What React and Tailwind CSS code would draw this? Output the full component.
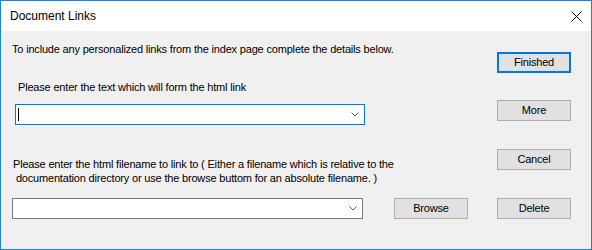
import React from "react";

function Chevron() {
  return (
    <svg width="8" height="5" viewBox="0 0 8 5" className="shrink-0">
      <path d="M0.5 0.5 L4 4 L7.5 0.5" fill="none" stroke="#606060" strokeWidth="1" />
    </svg>
  );
}

function Button({ label, focused }) {
  return (
    <div
      className={
        "w-[74px] h-[21px] flex items-center justify-center bg-[#e1e1e1] text-[11px] text-black " +
        (focused ? "border-2 border-[#0078d7]" : "border border-[#adadad]")
      }
    >
      {label}
    </div>
  );
}

export default function App() {
  return (
    <div
      className="w-[592px] h-[250px] border border-[#1883d7] flex flex-col bg-[#f0f0f0]"
      style={{ fontFamily: '"Liberation Sans", Arial, sans-serif' }}
    >
      {/* title bar */}
      <div className="h-[30px] bg-white flex items-center justify-between pl-[9px] pr-[9px] shrink-0">
        <span className="text-[12px] text-black">Document Links</span>
        <svg width="11" height="11" viewBox="0 0 11 11">
          <path d="M0.5 0.5 L10.5 10.5 M10.5 0.5 L0.5 10.5" stroke="#000" strokeWidth="1" />
        </svg>
      </div>

      <div className="flex-1 flex pl-[11px] text-[11px] text-black tracking-[-0.18px]">
        {/* left side */}
        <div className="w-[485px] flex flex-col">
          <p className="mt-[12px] leading-[13px]">
            To include any personalized links from the index page complete the details below.
          </p>
          <p className="mt-[25px] ml-[6px] leading-[13px]">
            Please enter the text which will form the html link
          </p>
          <div className="mt-[10px] ml-[3px] w-[350px] h-[21px] bg-white border border-[#0078d7] flex items-center justify-between pl-[2px] pr-[5px]">
            <div className="w-px h-[13px] bg-black" />
            <Chevron />
          </div>
          <p className="mt-[32px] ml-[1px] leading-[14px] whitespace-pre">
            {"Please enter the html filename to link to ( Either a filename which is relative to the\n documentation directory or use the browse buttom for an absolute filename. )"}
          </p>
          <div className="mt-[13px] flex items-center gap-[31px]">
            <div className="w-[351px] h-[21px] bg-white border border-[#7a7a7a] flex items-center justify-end pr-[5px]">
              <Chevron />
            </div>
            <Button label="Browse" />
          </div>
        </div>

        {/* right buttons */}
        <div className="flex flex-col">
          <div className="mt-[21px]">
            <Button label="Finished" focused />
          </div>
          <div className="mt-[27px]">
            <Button label="More" />
          </div>
          <div className="mt-[28px]">
            <Button label="Cancel" />
          </div>
          <div className="mt-[28px]">
            <Button label="Delete" />
          </div>
        </div>
      </div>
    </div>
  );
}
